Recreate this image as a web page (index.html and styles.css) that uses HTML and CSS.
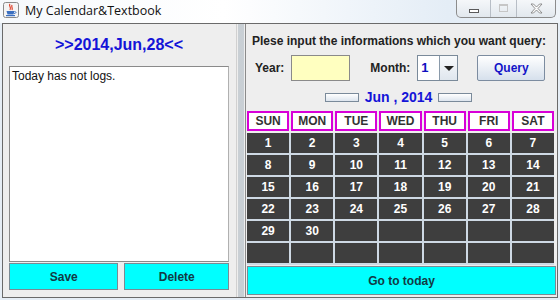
FILE: index.html
```html
<!DOCTYPE html>
<html lang="en">
  <head>
    <meta charset="UTF-8" />
    <title>My Calendar&amp;Textbook</title>
    <link rel="stylesheet" href="styles.css">
  </head>
  <body>
    <!-- Title bar -->
    <div class="titlebar">
      <svg class="app-icon" width="16" height="16" viewBox="0 0 16 16">
        <rect x="0.5" y="0.5" width="15" height="15" rx="2" fill="#f4f4f4" stroke="#8a8a8a"/>
        <path d="M7 2 C5 4 9 5 7 8 M9 3 C8 5 10 6 9 8" stroke="#e0402a" stroke-width="1.2" fill="none"/>
        <path d="M3.5 9 L11.5 9 L10.5 12.5 L4.5 12.5 Z" fill="#3a6fc0"/>
        <path d="M11.5 9.5 C13.5 9.5 13.5 11.5 11 11.5" stroke="#3a6fc0" fill="none"/>
        <rect x="3" y="13" width="9" height="1.2" fill="#3a6fc0"/>
      </svg>
      <span class="title">My Calendar&amp;Textbook</span>
      <div class="controls">
        <div class="ctl ctl-min"><span class="min-glyph"></span></div>
        <div class="ctl ctl-max"><span class="max-glyph"></span></div>
        <div class="ctl ctl-close">
          <svg width="13" height="11" viewBox="0 0 13 11">
            <path d="M1 1 L3.5 1 L6.5 4 L9.5 1 L12 1 L8 5.5 L12 10 L9.5 10 L6.5 7 L3.5 10 L1 10 L5 5.5 Z" fill="#fafafa" stroke="#7a7a7a" stroke-width="0.8"/>
          </svg>
        </div>
      </div>
    </div>

    <div class="frame">
      <!-- Left: logs -->
      <div class="left">
        <h2 class="today">&gt;&gt;2014,Jun,28&lt;&lt;</h2>
        <div class="logs">Today has not logs.</div>
        <div class="log-buttons">
          <button class="cyan save">Save</button>
          <button class="cyan delete">Delete</button>
        </div>
      </div>

      <div class="splitter"></div>

      <!-- Right: calendar -->
      <div class="right">
        <p class="prompt">Plese input the informations which you want query:</p>
        <div class="query-row">
          <span class="label year-label">Year:</span>
          <div class="year-input"></div>
          <span class="label month-label">Month:</span>
          <div class="combo">
            <span class="combo-value">1</span>
            <span class="combo-arrow"></span>
          </div>
          <button class="query">Query</button>
        </div>
        <div class="nav-row">
          <span class="nav-btn"></span>
          <span class="month-title">Jun , 2014</span>
          <span class="nav-btn"></span>
        </div>

        <div class="week-head">
          <div>SUN</div><div>MON</div><div>TUE</div><div>WED</div><div>THU</div><div>FRI</div><div>SAT</div>
        </div>
        <div class="days" id="days"></div>

        <button class="cyan go-today">Go to today</button>
      </div>
    </div>

    <script>
      var days = document.getElementById("days");
      for (var i = 1; i <= 42; i++) {
        var cell = document.createElement("div");
        cell.className = "day";
        cell.innerText = i <= 30 ? i : "";
        days.appendChild(cell);
      }
    </script>
  </body>
</html>
```

FILE: styles.css
```css
* {
  margin: 0;
  padding: 0;
  box-sizing: border-box;
}

body {
  width: 560px;
  height: 300px;
  overflow: hidden;
  background: #e6eef6;
  font-family: "Liberation Sans", Arial, sans-serif;
}

/* Title bar */
.titlebar {
  position: relative;
  height: 23px;
  display: flex;
  align-items: center;
  padding-left: 3px;
  background: linear-gradient(90deg, #f6f9fc, #ffffff 40%, #e4edf6 80%, #eef3f8);
}

.app-icon {
  margin-top: -3px;
}

.title {
  margin-left: 6px;
  margin-top: -3px;
  font-family: "Open Sans", "Noto Sans", sans-serif;
  font-size: 12.5px;
  color: #111;
}

.controls {
  position: absolute;
  top: -1px;
  left: 456px;
  display: flex;
  height: 19px;
  border: 1px solid #8c8c8c;
  border-top: none;
  border-radius: 0 0 5px 5px;
  background: linear-gradient(#f6f8fa, #e2e8ee);
  overflow: hidden;
}

.ctl {
  display: flex;
  align-items: center;
  justify-content: center;
  height: 100%;
}

.ctl-min {
  width: 34px;
  border-right: 1px solid #b8bec6;
}

.ctl-max {
  width: 26px;
  border-right: 1px solid #b8bec6;
}

.ctl-close {
  width: 38px;
}

.min-glyph {
  width: 10px;
  height: 4px;
  margin-top: 5px;
  border: 1px solid #5a5a5a;
  background: #fff;
}

.max-glyph {
  width: 9px;
  height: 8px;
  border: 1px solid #c6c6c6;
  border-top-width: 2px;
}

/* Main frame */
.frame {
  display: flex;
  margin-left: 2px;
  width: 556px;
  height: 275px;
  border: 1px solid #6a6a6a;
  background: #eeeeee;
}

.left {
  width: 234px;
  padding: 0 7px 0 6px;
  display: flex;
  flex-direction: column;
  border-right: 1px solid #d0d0d0;
}

.today {
  height: 42px;
  line-height: 42px;
  text-align: center;
  font-size: 16px;
  font-weight: bold;
  color: #1414d8;
}

.logs {
  height: 196px;
  background: #fff;
  border: 1px solid #8a8a8a;
  border-right-color: #b0b0b0;
  padding: 2px 2px;
  font-size: 12px;
  color: #111;
}

.log-buttons {
  display: flex;
  gap: 6px;
  margin-top: 1px;
}

.cyan {
  height: 27px;
  background: #00ffff;
  border: 1px solid #7a8a94;
  font-family: "Liberation Sans", Arial, sans-serif;
  font-size: 12px;
  font-weight: bold;
  color: #123a44;
}

.save {
  width: 110px;
}

.delete {
  width: 105px;
}

.splitter {
  width: 8px;
  background-color: #eeeeee;
  background-image: radial-gradient(circle, #b4bec6 0.6px, transparent 0.9px);
  background-size: 2px 2px;
  background-position: 1px 0;
  background-clip: content-box;
  padding: 0 1px;
}

.right {
  flex: 1;
  display: flex;
  flex-direction: column;
  border-left: 1px solid #8a8a8a;
  padding-top: 10px;
}

.prompt {
  padding-left: 6px;
  font-size: 12px;
  font-weight: bold;
  color: #222;
  line-height: 15px;
}

.query-row {
  display: flex;
  align-items: center;
  height: 26px;
  margin-top: 6px;
}

.label {
  font-size: 12px;
  font-weight: bold;
  color: #222;
}

.year-label {
  margin-left: 9px;
}

.year-input {
  width: 59px;
  height: 26px;
  margin-left: 7px;
  background: #ffffc0;
  border: 1px solid #8a8a8a;
}

.month-label {
  margin-left: 20px;
}

.combo {
  display: flex;
  width: 41px;
  height: 26px;
  margin-left: 7px;
  border: 1px solid #7a8a9a;
  background: #fff;
}

.combo-value {
  width: 22px;
  padding: 4px 0 0 3px;
  font-size: 13px;
  font-weight: bold;
  color: #1010c0;
  border-right: 1px solid #8a9aaa;
}

.combo-arrow {
  flex: 1;
  display: flex;
  align-items: center;
  justify-content: center;
  background: linear-gradient(#f8fafc, #dfe6ee);
}

.combo-arrow::after {
  content: "";
  border-left: 5px solid transparent;
  border-right: 5px solid transparent;
  border-top: 5px solid #222;
}

.query {
  width: 68px;
  height: 26px;
  margin-left: 19px;
  border: 1px solid #7c8ca0;
  border-radius: 2px;
  background: linear-gradient(#ffffff, #d6e0ec);
  font-family: "Liberation Sans", Arial, sans-serif;
  font-size: 12px;
  font-weight: bold;
  color: #1414c8;
}

.nav-row {
  display: flex;
  align-items: center;
  justify-content: center;
  gap: 6px;
  height: 16px;
  margin-top: 8px;
  padding-right: 6px;
}

.nav-btn {
  width: 34px;
  height: 9px;
  border: 1px solid #7a8a9a;
  background: linear-gradient(#ffffff, #dde5ee);
}

.month-title {
  font-size: 14px;
  font-weight: bold;
  color: #1414d8;
}

.week-head {
  display: grid;
  grid-template-columns: repeat(7, 1fr);
  gap: 2px;
  margin: 6px 3px 0 1px;
  height: 20px;
}

.week-head div {
  background: #fff;
  border: 2px solid #d800d8;
  text-align: center;
  font-size: 12px;
  font-weight: bold;
  color: #333;
  line-height: 16px;
}

.days {
  display: grid;
  grid-template-columns: repeat(7, 1fr);
  grid-auto-rows: 20px;
  gap: 2px;
  margin: 2px 3px 0 1px;
  padding-bottom: 2px;
  background: #ced9e4;
}

.day {
  background: #3e3e3e;
  color: #fff;
  text-align: center;
  font-size: 12px;
  font-weight: bold;
  line-height: 20px;
}

.go-today {
  height: 29px;
  margin: 1px 1px 0 1px;
  font-size: 12px;
}
```
